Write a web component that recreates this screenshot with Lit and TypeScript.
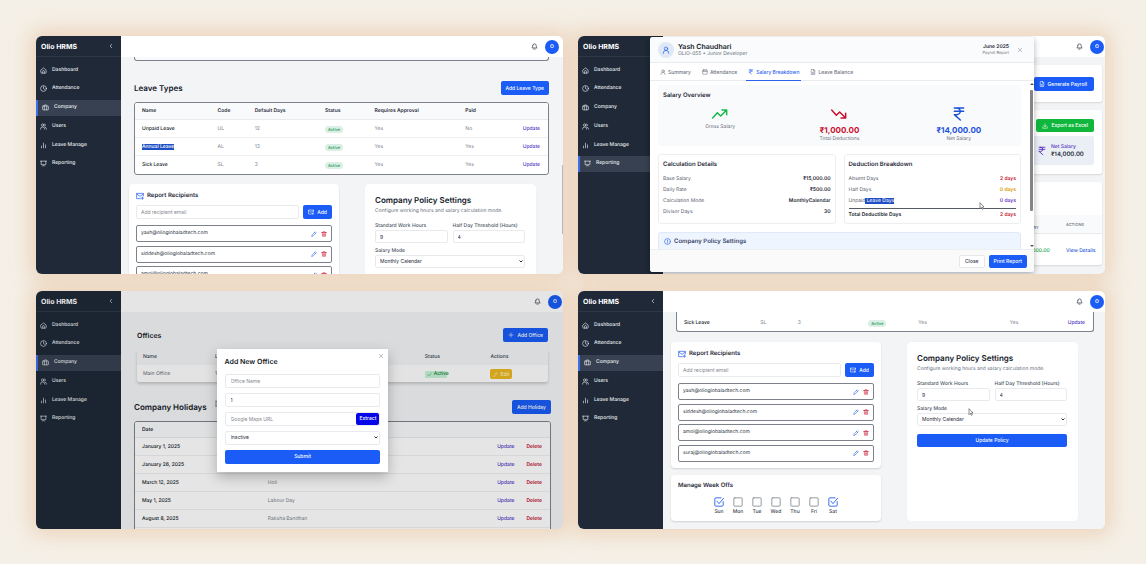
import { LitElement, html, css, svg, nothing } from "lit";
import { customElement, property } from "lit/decorators.js";
import { classMap } from "lit/directives/class-map.js";

const shapes: Record<string, any> = {
  home: svg`<path d="M3 10.5 12 3l9 7.500V19a2 2 0 0 1-2 2H5a2 2 0 0 1-2-2z"/><path d="M9 21v-6a3 3 0 0 1 6 0v6"/>`,
  clock: svg`<circle cx="12" cy="12" r="10"/><path d="M12 6v6l4 3"/>`,
  briefcase: svg`<rect x="2" y="7" width="20" height="13" rx="2"/><path d="M8 20V5a2 2 0 0 1 2-2h4a2 2 0 0 1 2 2v15"/>`,
  users: svg`<circle cx="9" cy="7" r="4"/><path d="M2 21v-1a6 6 0 0 1 6-6h2a6 6 0 0 1 6 6v1M16 3.200a4 4 0 0 1 0 7.600M18 14.500a6 6 0 0 1 4 5.500v1"/>`,
  bars: svg`<path d="M5 20v-6M12 20V4M19 20V10"/>`,
  screen: svg`<path d="M2 4h20M4 4v12h16V4M9 21l3-4 3 4"/>`,
  chevron: svg`<path d="m15 5-7 7 7 7"/>`,
  bell: svg`<path d="M6 9a6 6 0 0 1 12 0c0 6 3 8 3 8H3s3-2 3-8M10 21h4"/>`,
  mail: svg`<path d="M22 12V4H2v16h11M2 6l10 7L22 6M19 15v7M15.500 18.500h7"/>`,
  pencil: svg`<path d="m3 21 1.500-5.500L17 3l4 4L8.500 19.500zM14 6l4 4"/>`,
  trash: svg`<path d="M3 6h18M5 6l1 15h12l1-15M8 6V3h8v3M10 11v6M14 11v6"/>`,
  person: svg`<circle cx="12" cy="8" r="5"/><path d="M4 22v-1a8 8 0 0 1 16 0v1"/>`,
  calendar: svg`<rect x="3" y="4" width="18" height="17" rx="2"/><path d="M3 10h18M8 2v4M16 2v4"/>`,
  rupee: svg`<path d="M5 3h14M5 8h14M5 13h3a6 5 0 0 0 0-10M5 13l9 8"/>`,
  file: svg`<path d="M14 2H5v20h14V7zM14 2v5h5M9 13h6M9 17h6"/>`,
  up: svg`<path d="m1 18 7-8 5 5 9-9M15 6h7v7"/>`,
  down: svg`<path d="m1 6 7 8 5-5 9 9M15 18h7v-7"/>`,
  close: svg`<path d="M5 5l14 14M19 5 5 19"/>`,
  info: svg`<circle cx="12" cy="12" r="10"/><path d="M12 7v6M12 16v1"/>`,
  download: svg`<path d="M3 15v6h18v-6M12 3v12M7 10l5 5 5-5"/>`,
  plus: svg`<path d="M12 4v16M4 12h16"/>`,
  check: svg`<path d="m4 13 5 5L20 6"/>`,
  boxOff: svg`<rect x="2" y="2" width="20" height="20" rx="2"/>`,
  boxOn: svg`<path d="M22 11v9a2 2 0 0 1-2 2H4a2 2 0 0 1-2-2V4a2 2 0 0 1 2-2h13M7 10l5 6L23 3"/>`,
};

const icon = (name: string, cls = "") =>
  html`<svg class="ico ${cls}" viewBox="0 0 24 24" aria-hidden="true">${shapes[name]}</svg>`;

const cursor = html`<svg class="cursor" viewBox="0 0 8 12" aria-hidden="true"><path d="M1 1v9l2-2 1.500 3 1.500-.7L4.600 7.500H7z"/></svg>`;

const base = css`
  * { box-sizing: border-box; }
  :host {
    display: block;
    font-family: Inter, "Liberation Sans", sans-serif;
    font-size: 5px;
    line-height: 7px;
    color: #1f2937;
    text-rendering: geometricPrecision;
  }
  h2, h3, p, ul { margin: 0; padding: 0; font: inherit; }
  button, input, select { font: inherit; color: inherit; margin: 0; padding: 0; min-width: 0; }
  a { text-decoration: none; color: inherit; }
  .ico {
    width: 7px; height: 7px; flex: none; display: block;
    fill: none; stroke: currentColor; stroke-width: 2.2; stroke-linecap: round; stroke-linejoin: round;
  }
  .ico.s { width: 6px; height: 6px; }
  .ico.l { width: 10px; height: 10px; }
  .ico.xl { width: 16px; height: 16px; }
  .btn {
    border: 0; border-radius: 2px; background: #1a5cf5; color: #fff; font-weight: 500;
    height: 14px; padding: 0 5px; display: flex; align-items: center; justify-content: center; gap: 3px;
    white-space: nowrap; flex: none;
  }
  .field {
    display: block; width: 100%; height: 13px; border: 1px solid #e8eaed; border-radius: 2px;
    background: #fff; padding: 0 4px; outline: 0;
  }
  .field::placeholder { color: #85898f; opacity: 1; }
  select.field {
    appearance: none;
    background: #fff url("data:image/svg+xml,%3Csvg xmlns='http://www.w3.org/2000/svg' viewBox='0 0 8 6'%3E%3Cpath d='M1 1l3 3 3-3' fill='none' stroke='%23111827' stroke-width='1.8'/%3E%3C/svg%3E") no-repeat right 1px center / 4px 3px;
  }
  .h8 { font-size: 8px; line-height: 10px; font-weight: 600; color: #111827; }
  .h7 { font-size: 7px; line-height: 9px; font-weight: 600; color: #111827; }
  .h6 { font-size: 6px; line-height: 8px; font-weight: 600; color: #1f2937; }
  .between { display: flex; align-items: center; justify-content: space-between; flex: none; }
  table { width: 100%; border-spacing: 0; table-layout: fixed; }
  th, td { padding: 1px 0 0; text-align: left; font-weight: 400; white-space: nowrap; }
  .grid-box { border: 1px solid #7d828a; border-radius: 3px; background: #fff; overflow: hidden; flex: none; }
  .grid-box th { height: 17px; font-weight: 600; background: #f9fafb; border-bottom: 1px solid #e8eaed; }
  .grid-box td { height: 18px; color: #7b818b; border-bottom: 1px solid #eeeff2; }
  .grid-box tr:last-child td { border-bottom: 0; }
  .grid-box th:first-child, .grid-box td:first-child { padding-left: 7px; }
  .grid-box td:first-child { color: #111827; font-weight: 500; }
  .grid-box .end { text-align: right; padding-right: 8px; }
  .link { color: #4f35c4; font-weight: 500; }
  .del { color: #c01033; font-weight: 600; margin-left: 12px; }
  mark { background: #1f4fc4; color: #fff; }
  .pill { display: block; width: 18px; text-align: center; border-radius: 4px; background: #dcefe6; color: #159a4c; font-weight: 500; line-height: 7px; font-size: 4px; }
  .cursor { position: absolute; width: 6px; height: 8px; fill: #fff; stroke: #555; stroke-width: 1; }
`;

@customElement("hrms-frame")
class HrmsFrame extends LitElement {
  @property() active = "";
  @property({ type: Boolean }) tight = false;
  @property({ type: Boolean }) plain = false;

  static styles = [base, css`
    :host {
      position: relative; display: grid; grid-template-columns: 85px minmax(0, 1fr);
      aspect-ratio: 527 / 238; overflow: hidden; border-radius: 6px; background: #f3f4f6;
    }
    .side { background: #1f2937; color: #e8ebef; }
    .brand {
      height: 21px; padding: 0 7px 0 5px; border-bottom: 1px solid #2c3747; color: #fff;
      font-weight: 700; font-size: 7px; line-height: 9px;
    }
    nav { display: grid; align-content: space-between; height: 110px; margin-top: 5px; }
    nav a {
      display: flex; align-items: center; gap: 5px; height: 16px; padding-left: 4px; font-weight: 500;
    }
    nav a.on { background: #374151; border-left: 2px solid #3b6ef0; }
    .page { display: flex; flex-direction: column; min-width: 0; min-height: 0; overflow: hidden; }
    .bar {
      height: 21px; flex: none; background: #fff; display: flex; align-items: center;
      justify-content: flex-end; gap: 7px; padding-right: 4px; color: #1f2937;
    }
    .bar.tight { padding-right: 1px; }
    .bell { border: 0; background: none; }
    .face {
      width: 14px; height: 14px; border-radius: 50%; background: #1a5cf5; color: #fff;
      text-align: center; line-height: 15px; font-weight: 600;
    }
    .main { display: flex; flex-direction: column; flex: 1; min-height: 0; overflow: hidden; }
  `];

  render() {
    const items = [
      ["home", "Dashboard"], ["clock", "Attendance"], ["briefcase", "Company"],
      ["users", "Users"], ["bars", "Leave Manage"], ["screen", "Reporting"],
    ];
    return html`
      <aside class="side">
        <div class="brand between"><span>Olio HRMS</span>${this.plain ? nothing : icon("chevron", "s")}</div>
        <nav>
          ${items.map(([i, t]) => html`<a href="#" class=${classMap({ on: t === this.active })}>${icon(i)}<span>${t}</span></a>`)}
        </nav>
      </aside>
      <div class="page">
        <header class=${classMap({ bar: true, tight: this.tight })}>
          <button class="bell" aria-label="Notifications">${icon("bell")}</button>
          <span class="face">O</span>
        </header>
        <div class="main"><slot></slot></div>
      </div>
      <slot name="over"></slot>`;
  }
}

const leaveRow = (name: any, code: string, days: string, paid: string) => html`
  <tr>
    <td>${name}</td><td>${code}</td><td>${days}</td><td><span class="pill">Active</span></td>
    <td>Yes</td><td>${paid}</td><td class="end"><a class="link" href="#">Update</a></td>
  </tr>`;

const leaveCols = html`<colgroup>
  <col style="width:20%"><col style="width:9%"><col style="width:17%"><col style="width:12%">
  <col style="width:22%"><col style="width:8%"><col>
</colgroup>`;

@customElement("company-settings")
class CompanySettings extends LitElement {
  static styles = [base, css`
    :host { flex: none; }
    .cols { display: grid; grid-template-columns: 210fr 171fr; gap: 26px; padding: 0 27px 8px 8px; }
    .left { display: flex; flex-direction: column; gap: 7px; min-width: 0; }
    .card { background: #fff; border-radius: 4px; box-shadow: 0 1px 2px rgba(0, 0, 0, .14); }
    .rec { padding: 8px 7px 6px; }
    .title { display: flex; align-items: center; gap: 3px; }
    .title .ico { color: #2a62ee; width: 8px; height: 8px; }
    .add { display: flex; gap: 4px; margin: 5px 0 6px; }
    .add .field { height: 14px; flex: 1; }
    .add .btn { width: 29px; }
    ul { list-style: none; display: grid; align-content: space-between; height: 79px; }
    li {
      display: flex; align-items: center; gap: 4px; height: 17px; padding: 0 4px;
      border: 1px solid #7d828a; border-radius: 2px; color: #2d3540;
    }
    li span { flex: 1; }
    li button { border: 0; background: none; color: #2a62ee; display: block; line-height: 0; }
    li button + button { color: #c8102e; }
    .weeks { padding: 7px 7px 6px; }
    .days { display: flex; justify-content: center; gap: 5px; margin-top: 7px; }
    .days label { position: relative; width: 14px; display: grid; justify-items: center; gap: 2px; line-height: 6px; color: #8b8f96; }
    .days label.on { color: #2a62ee; }
    .days span { color: #374151; font-weight: 500; }
    .days input { position: absolute; inset: 0; opacity: 0; }
    .policy { padding: 11px 11px 8px 10px; box-shadow: 0 0 1px rgba(0, 0, 0, .08); }
    .sub { margin-top: 3px; color: #6b7280; white-space: nowrap; }
    .pair { display: grid; grid-template-columns: 1fr 1fr; gap: 5px; margin: 8px 0 5px; }
    .policy label { display: block; font-weight: 500; color: #4b5563; white-space: nowrap; }
    .policy .btn { width: 100%; height: 13px; margin-top: 8px; }
  `];

  render() {
    const mails = ["yash", "siddesh", "amol", "suraj"];
    const days = ["Sun", "Mon", "Tue", "Wed", "Thu", "Fri", "Sat"];
    return html`
      <div class="cols">
        <div class="left">
          <section class="card rec">
            <h3 class="title h6">${icon("mail")}Report Recipients</h3>
            <div class="add">
              <input class="field" type="email" placeholder="Add recipient email" aria-label="Recipient email">
              <button class="btn">${icon("mail", "s")}Add</button>
            </div>
            <ul>${mails.map((m) => html`
              <li><span>${m}@olioglobaladtech.com</span>
                <button aria-label="Edit">${icon("pencil", "s")}</button>
                <button aria-label="Delete">${icon("trash", "s")}</button></li>`)}
            </ul>
          </section>
          <section class="card weeks">
            <h3 class="h6">Manage Week Offs</h3>
            <div class="days">${days.map((d) => {
              const on = d[0] === "S";
              return html`<label class=${on ? "on" : ""}><input type="checkbox" .checked=${on}>${icon(on ? "boxOn" : "boxOff", "l")}<span>${d}</span></label>`;
            })}</div>
          </section>
        </div>
        <section class="card policy">
          <h3 class="h8">Company Policy Settings</h3>
          <p class="sub">Configure working hours and salary calculation mode.</p>
          <div class="pair">
            <div><label for="std">Standard Work Hours</label><input id="std" class="field" value="9"></div>
            <div><label for="half">Half Day Threshold (Hours)</label><input id="half" class="field" value="4"></div>
          </div>
          <label for="mode">Salary Mode</label>
          <select id="mode" class="field"><option>Monthly Calendar</option></select>
          <button class="btn">Update Policy</button>
        </section>
      </div>`;
  }
}

@customElement("leave-screen")
class LeaveScreen extends LitElement {
  static styles = [base, css`
    .wrap { padding: 0 14px 0 13px; flex: none; }
    .prev { height: 4px; border: 1px solid #7d828a; border-top: 0; border-radius: 0 0 3px 3px; background: #f9fafb; }
    .head { margin: 20px 0 7px; }
    company-settings { margin-top: 9px; }
    .thumb { position: absolute; right: 0; top: 54%; width: 1px; height: 29%; background: #b4b7bb; }
  `];
  render() {
    return html`<hrms-frame active="Company">
      <div class="wrap">
        <div class="prev"></div>
        <div class="between head"><h2 class="h8">Leave Types</h2><button class="btn">Add Leave Type</button></div>
        <div class="grid-box"><table>${leaveCols}
          <thead><tr><th>Name</th><th>Code</th><th>Default Days</th><th>Status</th><th>Requires Approval</th><th>Paid</th><th></th></tr></thead>
          <tbody>
            ${leaveRow("Unpaid Leave", "UL", "12", "No")}
            ${leaveRow(html`<mark>Annual Leave</mark>`, "AL", "13", "Yes")}
            ${leaveRow("Sick Leave", "SL", "3", "Yes")}
          </tbody></table></div>
      </div>
      <company-settings></company-settings>
      <div class="thumb" slot="over"></div>
    </hrms-frame>`;
  }
}

@customElement("policy-screen")
class PolicyScreen extends LitElement {
  static styles = [base, css`
    .wrap { padding: 0 11px 0 13px; flex: none; }
    .grid-box { border-top: 0; border-radius: 0 0 3px 3px; }
    .grid-box td { height: 19px; padding-top: 4px; }
    company-settings { margin-top: 10px; }
    .cursor { left: 74%; top: 49%; }
  `];
  render() {
    return html`<hrms-frame active="Company" tight>
      <div class="wrap"><div class="grid-box"><table>${leaveCols}
        <tbody>${leaveRow("Sick Leave", "SL", "3", "Yes")}</tbody></table></div></div>
      <company-settings></company-settings>
      <div slot="over">${cursor}</div>
    </hrms-frame>`;
  }
}

@customElement("payroll-screen")
class PayrollScreen extends LitElement {
  static styles = [base, css`
    .stack { display: flex; flex-direction: column; gap: 8px; padding: 8px 3px 8px 8px; }
    .card { background: #fff; border-radius: 3px; box-shadow: 0 1px 2px rgba(0, 0, 0, .12); }
    .gen { padding: 12px 8px 11px; display: flex; justify-content: flex-end; }
    .gen .btn { padding: 0 7px 0 5px; }
    .sum { padding: 9px 8px 8px; display: flex; flex-direction: column; align-items: flex-end; gap: 4px; height: 64px; }
    .sum .btn { background: #0fb83c; height: 13px; padding: 0 6px; }
    .tile { display: flex; align-items: center; gap: 4px; width: 62px; height: 29px; padding: 1px 0 0 5px; background: #e9eff5; color: #5b2fc4; border-radius: 2px; }
    .tile .ico { width: 10px; height: 10px; }
    .tile b { display: block; font-weight: 500; }
    .tile .h6 { display: block; }
    .list { padding-top: 33px; }
    .list th { height: 19px; padding-top: 2px; background: #f9fafb; color: #6b7280; font-weight: 500; font-size: 4px; line-height: 6px; border-bottom: 1px solid #e8eaed; }
    .list td { height: 31px; padding-top: 3px; font-weight: 500; }
    .list .net { width: 43px; }
    .list .act { width: 36px; }
    .green { color: #16a34a; }
    .blue { color: #1d56d6; }

    .layer { position: absolute; inset: 1px 0 2px 1px; display: flex; justify-content: center; }
    .modal {
      width: 73%; display: flex; flex-direction: column; background: #fff; border-radius: 3px; overflow: hidden;
      box-shadow: 0 2px 6px rgba(0, 0, 0, .3);
    }
    .top { height: 26px; padding: 0 11px 0 8px; background: #fafbfc; border-bottom: 1px solid #e9ebee; }
    .who { display: flex; align-items: center; gap: 4px; flex: 1; }
    .disc { width: 16px; height: 16px; border-radius: 50%; background: #dfe9f6; color: #2a62ee; display: grid; place-items: center; }
    .disc .ico { width: 8px; height: 8px; }
    .muted { color: #6b7280; }
    .when { text-align: right; margin-right: 8px; line-height: 6px; }
    .when b { font-weight: 600; color: #1f2937; display: block; margin-top: 1px; }
    .when span { font-size: 4px; }
    .x { border: 0; background: none; color: #8a8f98; }
    .tabs { display: flex; gap: 7px; height: 18px; padding: 0 8px; border-bottom: 1px solid #e9ebee; flex: none; }
    .tabs button { border: 0; border-bottom: 1px solid transparent; background: none; display: flex; align-items: center; gap: 2px; padding: 1px 2px 0; color: #6b7280; font-weight: 500; height: 18px; }
    .tabs .on { color: #2a62ee; border-color: #2a62ee; }
    .scroll { flex: 1; min-height: 0; display: flex; overflow: hidden; }
    .body { flex: 1; min-width: 0; padding: 4px 9px 0 8px; display: flex; flex-direction: column; gap: 8px; }
    .body > * { flex: none; }
    .rail { width: 4px; display: flex; flex-direction: column; align-items: center; gap: 5px; padding: 2px 0; }
    .rail i { width: 3px; height: 74%; background: #858585; border-radius: 1px; }
    .rail::before, .rail::after { content: ""; border: 2px solid transparent; border-top: 0; border-bottom: 2px solid #555; }
    .rail::after { transform: rotate(180deg); margin-top: auto; }
    .over { background: #f9fafb; border-radius: 3px; padding: 7px 5px 4px; height: 61px; }
    .three { display: grid; grid-template-columns: repeat(3, 1fr); gap: 5px; margin-top: 6px; text-align: center; color: #6b7280; }
    .three > div { display: grid; justify-items: center; align-content: start; }
    .three .ico { margin-bottom: 2px; }
    .three strong { font-size: 8px; line-height: 12px; font-weight: 700; }
    .g { color: #14b84a; } .r { color: #c8102e; } .b { color: #1a52dc; }
    .duo { display: grid; grid-template-columns: 1fr 1fr; gap: 8px; }
    .panel { border: 1px solid #eceef1; border-radius: 3px; padding: 6px 4px 4px; }
    dl { margin: 7px 0 0; display: grid; gap: 4px; }
    dl div { display: flex; justify-content: space-between; color: #5b6370; }
    dd { margin: 0; font-weight: 600; color: #1f2937; }
    dd.r { color: #c8102e; } dd.o { color: #d49a00; } dd.p { color: #6a35c9; }
    dl .total { border-top: 1px solid #555b66; padding-top: 3px; margin-top: -1px; color: #111827; font-weight: 600; }
    .note { height: 30px; display: flex; gap: 3px; padding: 5px; background: #eff5fe; border: 1px solid #dfe9f8; border-radius: 3px; }
    .note .ico { color: #2a62ee; }
    .note .h6 { color: #37446a; }
    .foot { height: 23px; flex: none; display: flex; justify-content: flex-end; align-items: center; gap: 4px; padding-right: 7px; background: #fafafb; border-top: 1px solid #eeeff1; }
    .foot .btn { height: 13px; }
    .foot .ghost { background: #fff; color: #374151; border: 1px solid #e5e7eb; }
    .cursor { left: 76%; top: 70%; }
  `];
  render() {
    const line = (k: any, v: string, c = "") => html`<div class=${c === "t" ? "total" : ""}><dt>${k}</dt><dd class=${c === "t" ? "r" : c}>${v}</dd></div>`;
    return html`<hrms-frame active="Reporting" tight plain>
      <div class="stack">
        <div class="card gen"><button class="btn">${icon("file", "s")}Generate Payroll</button></div>
        <div class="card sum">
          <button class="btn">${icon("download", "s")}Export as Excel</button>
          <div class="tile">${icon("rupee")}<div><b>Net Salary</b><span class="h6">₹14,000.00</span></div></div>
        </div>
        <div class="card list"><table>
          <thead><tr><th></th><th class="net">NET<br>SALARY</th><th class="act">ACTIONS</th></tr></thead>
          <tbody><tr><td></td><td class="green">₹14,000.00</td><td><a class="blue" href="#">View Details</a></td></tr></tbody>
        </table></div>
      </div>
      <div class="layer" slot="over">
        <div class="modal" role="dialog" aria-label="Payroll report">
          <div class="between top">
            <div class="who"><span class="disc">${icon("person")}</span>
              <div><h2 class="h7">Yash Chaudhari</h2><p class="muted">OLIO-055 • Junior Developer</p></div></div>
            <div class="when muted"><b>June 2025</b><span>Payroll Report</span></div>
            <button class="x" aria-label="Close dialog">${icon("close", "s")}</button>
          </div>
          <div class="tabs">
            <button>${icon("person", "s")}Summary</button><button>${icon("calendar", "s")}Attendance</button>
            <button class="on">${icon("rupee", "s")}Salary Breakdown</button><button>${icon("file", "s")}Leave Balance</button>
          </div>
          <div class="scroll">
            <div class="body">
              <section class="over">
                <h3 class="h6">Salary Overview</h3>
                <div class="three">
                  <div>${icon("up", "xl g")}<span>Gross Salary</span></div>
                  <div>${icon("down", "xl r")}<strong class="r">₹1,000.00</strong><span>Total Deductions</span></div>
                  <div>${icon("rupee", "xl b")}<strong class="b">₹14,000.00</strong><span>Net Salary</span></div>
                </div>
              </section>
              <div class="duo">
                <section class="panel"><h3 class="h6">Calculation Details</h3><dl>
                  ${line("Base Salary", "₹15,000.00")}${line("Daily Rate", "₹500.00")}
                  ${line("Calculation Mode", "MonthlyCalendar")}${line("Divisor Days", "30")}</dl></section>
                <section class="panel"><h3 class="h6">Deduction Breakdown</h3><dl>
                  ${line("Absent Days", "2 days", "r")}${line("Half Days", "0 days", "o")}
                  ${line(html`Unpaid<mark> Leave Days</mark>`, "0 days", "p")}${line("Total Deductible Days", "2 days", "t")}</dl></section>
              </div>
              <section class="note">${icon("info")}<h3 class="h6">Company Policy Settings</h3></section>
            </div>
            <div class="rail"><i></i></div>
          </div>
          <div class="foot"><button class="btn ghost">Close</button><button class="btn">Print Report</button></div>
        </div>
        ${cursor}
      </div>
    </hrms-frame>`;
  }
}

@customElement("office-screen")
class OfficeScreen extends LitElement {
  static styles = [base, css`
    .offices { padding: 16px 15px 0 16px; flex: none; }
    .holidays { padding: 18px 12px 0 13px; flex: none; }
    .office-table { margin-top: 7px; border-radius: 3px; box-shadow: 0 2px 3px rgba(0, 0, 0, .18); overflow: hidden; }
    .office-table th { height: 16px; background: #f3f4f6; font-weight: 500; color: #374151; }
    .office-table td { height: 17px; background: #fdfdfd; color: #5b6370; }
    .office-table th:first-child, .office-table td:first-child { padding-left: 6px; }
    .tag { display: flex; width: 22px; align-items: center; gap: 2px; padding: 0 2px; background: #c4f3d5; color: #15803d; font-weight: 500; border-radius: 1px; }
    .edit { height: 10px; width: 22px; background: #eab820; color: #fff3c8; gap: 2px; padding: 0; }
    .tag .ico, .edit .ico { width: 5px; height: 5px; }
    .grid-box { margin-top: 7px; }
    .grid-box th { height: 16px; }
    .dim { position: absolute; inset: 0; background: rgba(0, 0, 0, .1); display: grid; place-items: center; padding-left: 6px; }
    form { position: relative; width: 33%; padding: 8px; background: #fff; box-shadow: 0 5px 12px rgba(0, 0, 0, .25); display: grid; gap: 5px; }
    form .field { height: 14px; padding: 0 5px; }
    form .h7 { height: 12px; }
    .x { position: absolute; top: 4px; right: 4px; border: 0; background: none; color: #8a8f98; line-height: 0; }
    .map { position: relative; }
    .map .btn { position: absolute; right: 1px; top: 1px; height: 12px; width: 23px; padding: 0; background: #0606e6; }
    .cursor { left: 34%; top: 46%; }
  `];
  render() {
    const rows = [["January 1, 2025", ""], ["January 26, 2025", ""], ["March 12, 2025", "Holi"], ["May 1, 2025", "Labour Day"], ["August 8, 2025", "Raksha Bandhan"]];
    return html`<hrms-frame active="Company" tight>
      <div class="offices">
        <div class="between"><h2 class="h7">Offices</h2><button class="btn">${icon("plus", "s")}Add Office</button></div>
        <div class="office-table"><table>
          <colgroup><col style="width:19%"><col style="width:51%"><col style="width:16%"><col></colgroup>
          <thead><tr><th>Name</th><th>Lat</th><th>Status</th><th>Actions</th></tr></thead>
          <tbody><tr><td>Main Office</td><td>19</td><td><span class="tag">${icon("check")}Active</span></td>
            <td><button class="btn edit">${icon("pencil")}Edit</button></td></tr></tbody>
        </table></div>
      </div>
      <div class="holidays">
        <div class="between"><h2 class="h8">Company Holidays</h2><button class="btn">Add Holiday</button></div>
        <div class="grid-box"><table>
          <colgroup><col style="width:32%"><col><col style="width:20%"></colgroup>
          <thead><tr><th>Date</th><th></th><th></th></tr></thead>
          <tbody>${rows.map(([d, n]) => html`<tr><td>${d}</td><td>${n}</td>
            <td class="end"><a class="link" href="#">Update</a><a class="del" href="#">Delete</a></td></tr>`)}
            <tr><td></td><td></td><td></td></tr></tbody>
        </table></div>
      </div>
      <div slot="over">
        ${cursor}
        <div class="dim"><form>
          <h2 class="h7">Add New Office</h2><button type="button" class="x" aria-label="Close">${icon("close", "s")}</button>
          <input class="field" placeholder="Office Name" aria-label="Office name">
          <input class="field" value="1" aria-label="Radius">
          <div class="map"><input class="field" placeholder="Google Maps URL" aria-label="Google Maps URL"><button type="button" class="btn">Extract</button></div>
          <select class="field" aria-label="Status"><option>Inactive</option></select>
          <button type="button" class="btn">Submit</button>
        </form></div>
      </div>
    </hrms-frame>`;
  }
}

@customElement("app-root")
class AppRoot extends LitElement {
  static styles = css`
    :host { display: block; background: #f5f0e7; min-height: 100vh; overflow: hidden; }
    .board {
      display: grid; grid-template-columns: repeat(auto-fit, minmax(min(100%, 480px), 1fr));
      gap: 17px 15px; padding: 36px 41px 35px 36px;
    }
    .board > * { border-radius: 6px; box-shadow: 0 0 20px 6px rgba(232, 200, 170, .7); }
  `;
  render() {
    return html`<main class="board">
      <leave-screen></leave-screen><payroll-screen></payroll-screen>
      <office-screen></office-screen><policy-screen></policy-screen>
    </main>`;
  }
}
